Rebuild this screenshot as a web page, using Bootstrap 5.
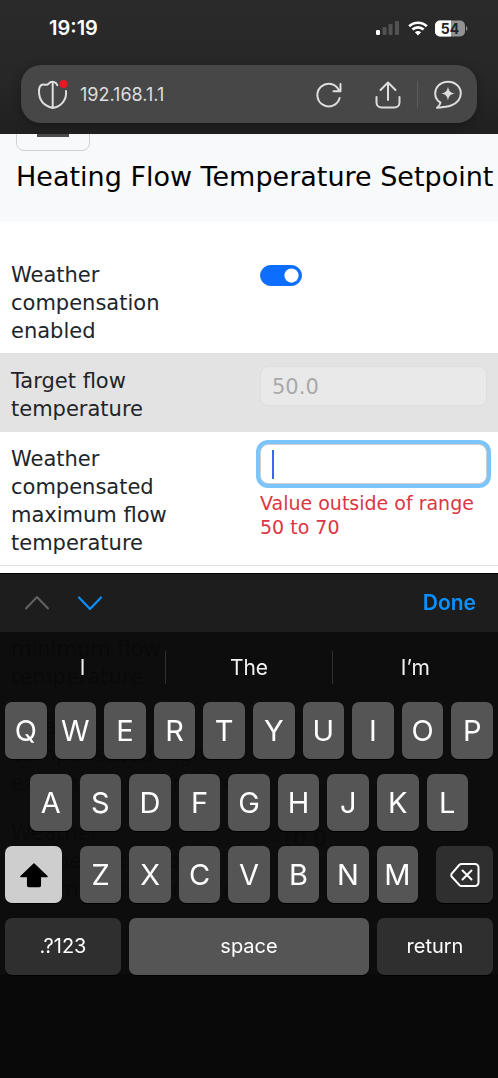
<!DOCTYPE html>
<html lang="en">
<head>
<meta charset="utf-8">
<meta name="viewport" content="width=device-width, initial-scale=1">
<title>Heating Flow Temperature Setpoint</title>
<link href="https://cdn.jsdelivr.net/npm/bootstrap@5.3.0/dist/css/bootstrap.min.css" rel="stylesheet">
<style>
  body { font-family: "DejaVu Sans", Verdana, sans-serif; font-size: 21px; line-height: 28px; color: #212529; }
  button { font: inherit; }
  .system { font-family: Inter, "Liberation Sans", sans-serif; }

  /* Browser chrome */
  .chrome { background: linear-gradient(#2a2a2a, #272727 60%, #202020); color: #fff; padding: 0 21px 11px; }
  .status { height: 65px; padding: 0 7px 9px 28px; }
  .clock { font-size: 20px; font-weight: 600; }
  .address { height: 58px; border-radius: 20px; background: #474747; color: #dedede; padding: 1px 15px 0 16px; box-shadow: 0 2px 12px rgba(0,0,0,.3); }
  .url { font-size: 18px; margin-left: 12px; }
  .icon-btn { border: 0; padding: 0; background: none; color: inherit; display: flex; }
  .share { margin-left: 33px; }
  .rule { width: 1px; height: 27px; background: #5c5c5c; }
  .bottom-bar { height: 104px; background: #272727; }

  /* Settings page */
  .page-head { background: #f8f9fa; padding: 0 0 29px 16px; margin-top: -37px; }
  .menu-toggle { width: 74px; height: 54px; border: 1px solid #cfd1d3; border-radius: 8px; padding: 0; }
  .menu-toggle i { display: block; width: 32px; height: 3px; background: #4b4c4d; }
  .page-title { font-size: 27px; line-height: 32px; color: #000; margin: 10px 0 0; white-space: nowrap; }
  .settings { margin-top: 26px; padding: 0 11px; }
  .setting { padding: 12px 0 8px; border-bottom: 1px solid #dee2e6; --bs-gutter-x: 22px; }
  .setting label { padding-top: 1px; }
  .setting.locked { background: #e3e3e3; }
  .setting .form-control { height: 40px; font-size: 21px; line-height: 28px; padding: 6px 11px 4px; border-radius: 8px; }
  .setting .form-control:disabled { background: #e9e9e9; color: #a9a9a9; border-color: #dedede; }
  .setting .form-control.editing { border-color: #cfcfcf; box-shadow: 0 0 0 4px #7cc4fc; caret-color: transparent; }
  .setting .form-switch { min-height: 28px; padding: 0; margin: 0; }
  .setting .form-switch .form-check-input { margin: 5px 0 0; }
  .caret { left: 12px; top: 6px; width: 2px; height: 29px; background: #3b66f0; }
  .range-error { font-size: 19px; line-height: 24px; margin-top: 7px; color: #dc3545; display: block; }

  /* On-screen keyboard */
  .keyboard { background: rgba(9,9,9,.985); color: #fff; border-top: 1px solid #000; }
  .assist { height: 58px; gap: 27px; background: #1d1d1d; padding: 0 22px 0 24px; }
  .done { color: #0a91ff; font-size: 21px; font-weight: 600; }
  .suggest { height: 70px; }
  .suggest button { border: 0; background: none; color: #f1f1f1; font-size: 21px; line-height: 33px; padding: 0; }
  .suggest button + button { border-left: 1px solid #303030; }
  .keys { padding: 0 5px 103px; gap: 15px; }
  .key-row { gap: 8px; }
  .key-row.inset { padding: 0 25px; }
  .key-row.spread { gap: 18px; }
  .key { flex: 1 1 0; min-width: 0; height: 57px; border: 0; border-radius: 7px; padding: 0; background: #555; color: #fff; font-size: 29px; line-height: 57px; box-shadow: 0 1px 0 #000; display: flex; align-items: center; justify-content: center; }
  .key.dark { background: #2f2f2f; }
  .key.lit { background: #cecece; color: #000; }
  .key.edge { flex: 0 0 57px; }
  .key.wordy { font-size: 20px; flex: 116 1 0; }
  .key.space { flex-grow: 240; }
</style>
</head>
<body class="vh-100 d-flex flex-column overflow-hidden bg-white">

<header class="chrome system position-relative">
  <div class="status d-flex align-items-center">
    <span class="clock me-auto">19:19</span>
    <svg width="24" height="16" viewBox="0 0 24 16" aria-label="Signal"><rect x="0" y="10" width="4" height="5" rx="1.2" fill="#fff"/><g fill="#525252"><rect x="6.5" y="7" width="4" height="8" rx="1.2"/><rect x="12.500" y="4" width="4" height="11" rx="1.200"/><rect x="19" y="1" width="4" height="14" rx="1.200"/></g></svg>
    <svg class="ms-2" width="20" height="15" viewBox="0 0 20 15" fill="none" stroke="#fff" stroke-width="2.700" aria-label="Wi-Fi"><path d="M1.200 5.200C6 .6 14 .6 18.800 5.200M4.400 8.600c3.200-3 8-3 11.200 0"/><path d="M10 14.500 6.900 11.300c1.700-1.600 4.500-1.600 6.200 0z" fill="#fff" stroke="none"/></svg>
    <svg class="ms-1" width="38" height="17" viewBox="0 0 38 17" aria-label="Battery 54 percent"><defs><clipPath id="cell"><rect x="3" y="0.500" width="30" height="16" rx="5"/></clipPath></defs><g clip-path="url(#cell)"><rect x="3" width="30" height="17" fill="#929292"/><rect x="3" width="16" height="17" fill="#fff"/></g><path d="M34 6v5c1.800-.7 1.800-4.300 0-5z" fill="#929292"/><text x="18" y="13.500" text-anchor="middle" font-size="14" font-weight="700" fill="#222">54</text></svg>
  </div>
  <div class="address d-flex align-items-center">
    <button class="icon-btn" aria-label="Privacy shield"><svg width="31" height="32" viewBox="0 0 31 32" fill="none" stroke="#dedede" stroke-width="2" stroke-linecap="round"><path d="M20.300 6.300C19 2.300 14 1.700 11.800 4.600 9.800 7 7.500 5 5 5.700 2.600 6.500 2 9.500 2 12.500c0 9 5.500 14.500 13.700 16.500C24 27.500 30 21 29 12M15.700 3v26"/><circle cx="26.500" cy="5" r="4" fill="#f01525" stroke="none"/></svg></button>
    <span class="url me-auto">192.168.1.1</span>
    <button class="icon-btn" aria-label="Reload"><svg width="26" height="28" viewBox="0 0 26 28" fill="none" stroke="#dedede" stroke-width="2" stroke-linecap="round" stroke-linejoin="round"><path d="M23.600 17A11.300 11.300 0 1 1 23 9.500M24.500 3v7.200h-7"/></svg></button>
    <button class="icon-btn share" aria-label="Share"><svg width="26" height="28" viewBox="0 0 26 28" fill="none" stroke="#dedede" stroke-width="2" stroke-linecap="round" stroke-linejoin="round"><path d="M13 19V2M5.500 9 13 1.500 20.500 9M1.500 16v5.500a5 5 0 0 0 5 5h13a5 5 0 0 0 5-5V16"/></svg></button>
    <span class="rule mx-3"></span>
    <button class="icon-btn" aria-label="Assistant"><svg width="28" height="29" viewBox="0 0 28 29" fill="none" stroke="#dedede" stroke-width="2" stroke-linejoin="round"><path d="M6.500 22.500C3 20.500 1.200 17 1.200 13.700 1.200 6.500 7 1.700 14 1.700s12.800 4.800 12.800 11.500c0 6-4 10-9.800 12.300-4.500 1.500-9 1.800-14 2.200 2-1.600 3.300-3 3.500-5.200z"/><path d="M14 6.500c.8 4.600 2.400 6.200 7 7-4.600.8-6.200 2.400-7 7-.8-4.600-2.400-6.200-7-7 4.600-.8 6.200-2.400 7-7z" fill="#dedede" stroke="none"/></svg></button>
  </div>
</header>

<main class="flex-grow-1 overflow-hidden">
  <div class="page-head">
    <button class="menu-toggle bg-transparent d-flex flex-column align-items-center justify-content-center gap-2" aria-label="Toggle menu"><i></i><i></i><i></i></button>
    <h1 class="page-title fw-normal">Heating Flow Temperature Setpoint</h1>
  </div>
  <form class="settings container-fluid">
    <div class="row setting">
      <label class="col-6" for="enabled">Weather compensation enabled</label>
      <div class="col-6"><div class="form-check form-switch"><input class="form-check-input float-none d-block shadow-none" type="checkbox" role="switch" id="enabled" checked></div></div>
    </div>
    <div class="row setting locked">
      <label class="col-6" for="target">Target flow temperature</label>
      <div class="col-6"><input class="form-control" id="target" value="50.0" disabled></div>
    </div>
    <div class="row setting">
      <label class="col-6" for="maximum">Weather compensated maximum flow temperature</label>
      <div class="col-6">
        <div class="position-relative"><input class="form-control editing" id="maximum" inputmode="decimal" aria-describedby="maximum-error"><span class="caret position-absolute"></span></div>
        <span class="range-error" id="maximum-error">Value outside of range 50 to 70</span>
      </div>
    </div>
    <div class="row setting">
      <label class="col-6" for="minimum">Weather compensated minimum flow temperature</label>
      <div class="col-6"><input class="form-control" id="minimum"></div>
    </div>
    <div class="row setting">
      <label class="col-6" for="high">Weather compensated high external temperature</label>
      <div class="col-6"><input class="form-control" id="high" value="12.0"></div>
    </div>
    <div class="row setting">
      <label class="col-6" for="low">Weather compensated low external temperature</label>
      <div class="col-6"><input class="form-control" id="low" value="-10.0"></div>
    </div>
  </form>
</main>
<footer class="bottom-bar flex-shrink-0"></footer>

<section class="keyboard system fixed-bottom" aria-label="Keyboard">
  <div class="assist d-flex align-items-center">
    <button class="icon-btn" aria-label="Previous field"><svg width="26" height="16" viewBox="0 0 26 16" fill="none" stroke="#626262" stroke-width="2" stroke-linecap="round" stroke-linejoin="round"><path d="M2 13.500 13 2l11 11.500"/></svg></button>
    <button class="icon-btn" aria-label="Next field"><svg width="26" height="16" viewBox="0 0 26 16" fill="none" stroke="#0a91ff" stroke-width="2.200" stroke-linecap="round" stroke-linejoin="round"><path d="M2 2.500 13 14 24 2.500"/></svg></button>
    <button class="icon-btn done ms-auto">Done</button>
  </div>
  <div class="suggest d-flex align-items-center">
    <button class="col">I</button><button class="col">The</button><button class="col">I’m</button>
  </div>
  <div class="keys d-flex flex-column">
    <div class="key-row d-flex"><button class="key">Q</button><button class="key">W</button><button class="key">E</button><button class="key">R</button><button class="key">T</button><button class="key">Y</button><button class="key">U</button><button class="key">I</button><button class="key">O</button><button class="key">P</button></div>
    <div class="key-row inset d-flex"><button class="key">A</button><button class="key">S</button><button class="key">D</button><button class="key">F</button><button class="key">G</button><button class="key">H</button><button class="key">J</button><button class="key">K</button><button class="key">L</button></div>
    <div class="key-row spread d-flex">
      <button class="key edge lit" aria-label="Shift"><svg width="30" height="26" viewBox="0 0 30 26"><path d="M15 2 28 14.500H21.300V23.500a1 1 0 0 1-1 1H9.700a1 1 0 0 1-1-1V14.500H2z" fill="#000" stroke="#000" stroke-width="1.500" stroke-linejoin="round"/></svg></button>
      <div class="key-row d-flex flex-fill"><button class="key">Z</button><button class="key">X</button><button class="key">C</button><button class="key">V</button><button class="key">B</button><button class="key">N</button><button class="key">M</button></div>
      <button class="key edge dark" aria-label="Delete"><svg width="30" height="26" viewBox="0 0 30 26" fill="none" stroke="#fff" stroke-width="2" stroke-linecap="round" stroke-linejoin="round"><path d="M11 2h14a3.500 3.500 0 0 1 3.500 3.500v15A3.500 3.500 0 0 1 25 24H11.500a3 3 0 0 1-2-.8L2 15a2.600 2.600 0 0 1 0-3.700L9.200 3A3 3 0 0 1 11 2zM12.500 8.500l9 9M21.500 8.500l-9 9"/></svg></button>
    </div>
    <div class="key-row d-flex"><button class="key wordy dark">.?123</button><button class="key wordy space">space</button><button class="key wordy dark">return</button></div>
  </div>
</section>

<script src="https://cdn.jsdelivr.net/npm/bootstrap@5.3.0/dist/js/bootstrap.bundle.min.js"></script>
</body>
</html>
